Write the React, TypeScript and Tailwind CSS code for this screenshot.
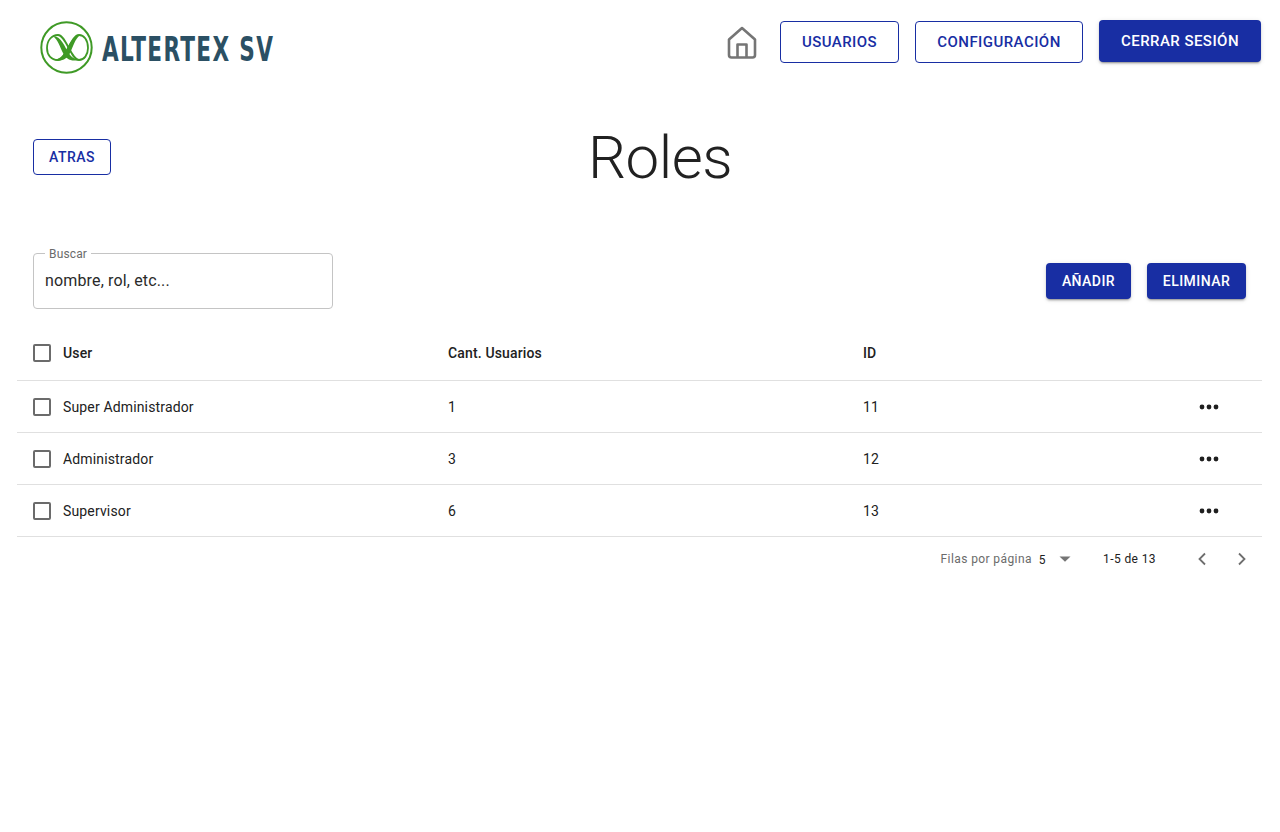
import React from "react";

const FONT = "font-['Roboto',sans-serif]";

function OutlineBtn({ children, className = "" }: { children: React.ReactNode; className?: string }) {
  return (
    <button className={`flex items-center justify-center rounded border border-[#182ea3] bg-white text-[#182ea3] font-medium uppercase tracking-[0.45px] ${className}`}>
      {children}
    </button>
  );
}

function SolidBtn({ children, className = "" }: { children: React.ReactNode; className?: string }) {
  return (
    <button className={`flex items-center justify-center rounded bg-[#182ea3] text-white font-medium uppercase tracking-[0.45px] shadow-[0_3px_1px_-2px_rgba(0,0,0,0.2),0_2px_2px_0_rgba(0,0,0,0.14),0_1px_5px_0_rgba(0,0,0,0.12)] ${className}`}>
      {children}
    </button>
  );
}

function Check() {
  return <span className="block h-[18px] w-[18px] shrink-0 rounded-[2px] border-2 border-[#6b6b6b]" />;
}

function Dots() {
  return (
    <svg width="20" height="6" viewBox="0 0 20 6" fill="#1f1f1f">
      <circle cx="3" cy="3" r="2.4" />
      <circle cx="10" cy="3" r="2.4" />
      <circle cx="17" cy="3" r="2.4" />
    </svg>
  );
}

const rows = [
  ["Super Administrador", "1", "11"],
  ["Administrador", "3", "12"],
  ["Supervisor", "6", "13"],
];

export default function App() {
  return (
    <div className={`${FONT} min-h-[832px] w-[1280px] bg-white text-[#212121]`}>
      <header className="flex h-[84px] items-center justify-between pl-10 pr-[19px]">
        <div className="mt-[10px] flex items-center gap-[9px]">
          <svg width="53" height="53" viewBox="0 0 53 53" fill="none">
            <circle cx="26.5" cy="26.5" r="25.2" stroke="#3f9a26" strokeWidth="2" />
            <path d="M7 27c0-8 5-13 11-13 8 0 13 25 21 25 5 0 9-5 9-12" stroke="#3f9a26" strokeWidth="1.8" />
            <path d="M7 27c0 7 4 12 11 12 8 0 13-25 21-25 5 0 9 5 9 13" stroke="#3f9a26" strokeWidth="1.8" />
            <path d="M13 15c8 0 12 11 15 16 3 5 6 7 11 8-8 2-13-1-16-7-3-6-5-13-10-17Z" fill="#3f9a26" />
            <path d="M40 14c-8 1-12 12-15 17-3 5-6 7-11 8 8 2 13-1 16-7 3-6 5-14 10-18Z" fill="#3f9a26" />
          </svg>
          <span className="origin-left translate-y-[3px] scale-y-[1.4] whitespace-nowrap font-['DejaVu_Sans_Condensed','DejaVu_Sans',sans-serif] text-[24px] font-bold leading-none tracking-[1.35px] text-[#2b5064]">
            ALTERTEX SV
          </span>
        </div>
        <div className="flex items-center">
          <svg className="mr-[23px]" width="30" height="33" viewBox="0 0 30 33" fill="none" stroke="#757575" strokeWidth="2.6" strokeLinejoin="round">
            <path d="M2 13.5 15 2l13 11.5V29a2.5 2.5 0 0 1-2.5 2.5h-21A2.5 2.5 0 0 1 2 29Z" />
            <path d="M10.5 31V18.5h9V31" />
          </svg>
          <OutlineBtn className="h-[42px] w-[119px] text-[15px]">Usuarios</OutlineBtn>
          <OutlineBtn className="ml-4 h-[42px] w-[168px] text-[15px]">Configuración</OutlineBtn>
          <SolidBtn className="ml-4 -mt-[2px] h-[42px] w-[162px] text-[15px]">Cerrar sesión</SolidBtn>
        </div>
      </header>

      <section className="relative mt-[55px] h-[36px] pl-[33px]">
        <OutlineBtn className="h-[36px] w-[78px] text-sm">Atras</OutlineBtn>
        <h1 className="absolute left-0 right-0 top-[-17px] pl-10 text-center text-[60px] font-light leading-[72px] tracking-[-0.5px] text-[#212121]">
          Roles
        </h1>
      </section>

      <section className="mt-[78px] flex items-end justify-between pl-[33px] pr-[34px]">
        <div className="relative flex h-[56px] w-[300px] items-center rounded border border-[#c4c4c4] px-[11px] pb-[1px] text-base tracking-[0.15px] text-[#2a2a2a]">
          nombre, rol, etc...
          <span className="absolute -top-[7px] left-[11px] bg-white px-[4px] text-xs leading-[14px] tracking-[0.15px] text-[#6b6b6b]">Buscar</span>
        </div>
        <div className="mb-[10px] flex gap-4">
          <SolidBtn className="h-[36px] w-[85px] text-sm">Añadir</SolidBtn>
          <SolidBtn className="h-[36px] w-[99px] text-sm">Eliminar</SolidBtn>
        </div>
      </section>

      <section className="ml-[17px] mt-[18px] w-[1245px] text-sm tracking-[0.15px]">
        <div className="grid h-[54px] grid-cols-[431px_415px_1fr] items-center border-b border-[#e0e0e0] pb-[2px] font-medium">
          <div className="flex items-center gap-3 pl-4"><Check /><span>User</span></div>
          <div>Cant. Usuarios</div>
          <div>ID</div>
        </div>
        {rows.map((r) => (
          <div key={r[0]} className="grid h-[52px] grid-cols-[431px_415px_1fr_63px] items-center border-b border-[#e0e0e0]">
            <div className="flex items-center gap-3 pl-4"><Check /><span>{r[0]}</span></div>
            <div>{r[1]}</div>
            <div>{r[2]}</div>
            <div className="flex pt-[1px]"><Dots /></div>
          </div>
        ))}
        <div className="flex h-[44px] items-center justify-end text-xs tracking-[0.4px]">
          <span className="text-[#6b6b6b]">Filas por página</span>
          <span className="ml-[7px] mt-[2px]">5</span>
          <svg className="ml-[13px]" width="12" height="6" viewBox="0 0 12 6" fill="#757575"><path d="M0.5 0.5h11L6 5.8Z" /></svg>
          <span className="ml-[32px]">1-5 de 13</span>
          <svg className="ml-[40px]" width="12" height="14" viewBox="0 0 12 14" fill="none" stroke="#6e6e6e" strokeWidth="1.8"><path d="M9 1.5 3.5 7 9 12.5" /></svg>
          <svg className="ml-[28px] mr-[14px]" width="12" height="14" viewBox="0 0 12 14" fill="none" stroke="#6e6e6e" strokeWidth="1.8"><path d="M3 1.5 8.5 7 3 12.5" /></svg>
        </div>
      </section>
    </div>
  );
}
